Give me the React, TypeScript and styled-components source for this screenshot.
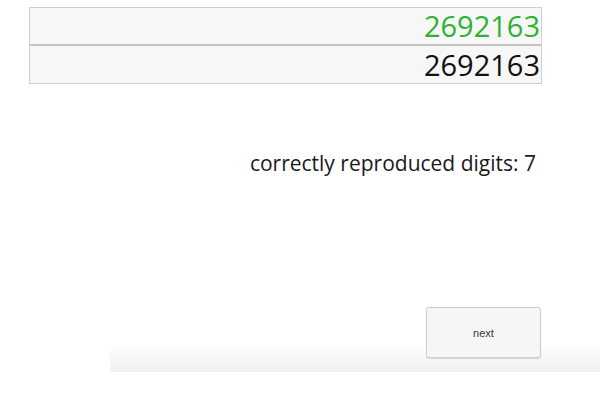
import styled, { createGlobalStyle } from 'styled-components';

const GlobalStyle = createGlobalStyle`
  html, body {
    margin: 0;
    padding: 0;
    background: #ffffff;
  }
  body {
    font-family: "Open Sans", "Noto Sans", sans-serif;
  }
`;

const Page = styled.div`
  width: 600px;
  height: 410px;
  display: flex;
  flex-direction: column;
  padding-top: 7px;
  box-sizing: border-box;
  overflow: hidden;
`;

const DigitTable = styled.div`
  margin-left: 29px;
  width: 513px;
  display: flex;
  flex-direction: column;
  border: 1px solid #cfcfcf;
  box-sizing: border-box;
  background: #f7f7f7;
`;

const DigitRow = styled.div<{ $color: string; $divider?: boolean }>`
  height: ${(p) => (p.$divider ? 38 : 37)}px;
  display: flex;
  align-items: center;
  justify-content: flex-end;
  padding-right: 1px;
  padding-bottom: 1px;
  box-sizing: border-box;
  font-size: 29px;
  line-height: 1;
  color: ${(p) => p.$color};
  border-bottom: ${(p) => (p.$divider ? '2px solid #c4c4c4' : 'none')};
`;

const Result = styled.div`
  margin-top: 65px;
  padding-right: 64px;
  text-align: right;
  font-size: 21px;
  color: #1a1a1a;
`;

const Footer = styled.div`
  margin-top: 130px;
  margin-left: 110px;
  height: 65px;
  display: flex;
  justify-content: flex-end;
  align-items: flex-start;
  padding-right: 59px;
  background: linear-gradient(
    to bottom,
    rgba(255, 255, 255, 0) 0,
    rgba(255, 255, 255, 0) 42px,
    #fbfbfb 42px,
    #f1f1f1 65px
  );
`;

const NextButton = styled.button`
  width: 115px;
  height: 51px;
  border: 1px solid #cdcdcd;
  border-radius: 3px;
  background: #f6f6f6;
  box-shadow: 0 1px 1px rgba(0, 0, 0, 0.12);
  font-family: "Liberation Sans", Arial, sans-serif;
  font-size: 11px;
  color: #333a40;
  padding: 0;
  cursor: pointer;
`;

export default function App() {
  return (
    <>
      <GlobalStyle />
      <Page>
        <DigitTable>
          <DigitRow $color="#2db231" $divider>2692163</DigitRow>
          <DigitRow $color="#111111">2692163</DigitRow>
        </DigitTable>
        <Result>correctly reproduced digits: 7</Result>
        <Footer>
          <NextButton>next</NextButton>
        </Footer>
      </Page>
    </>
  );
}
